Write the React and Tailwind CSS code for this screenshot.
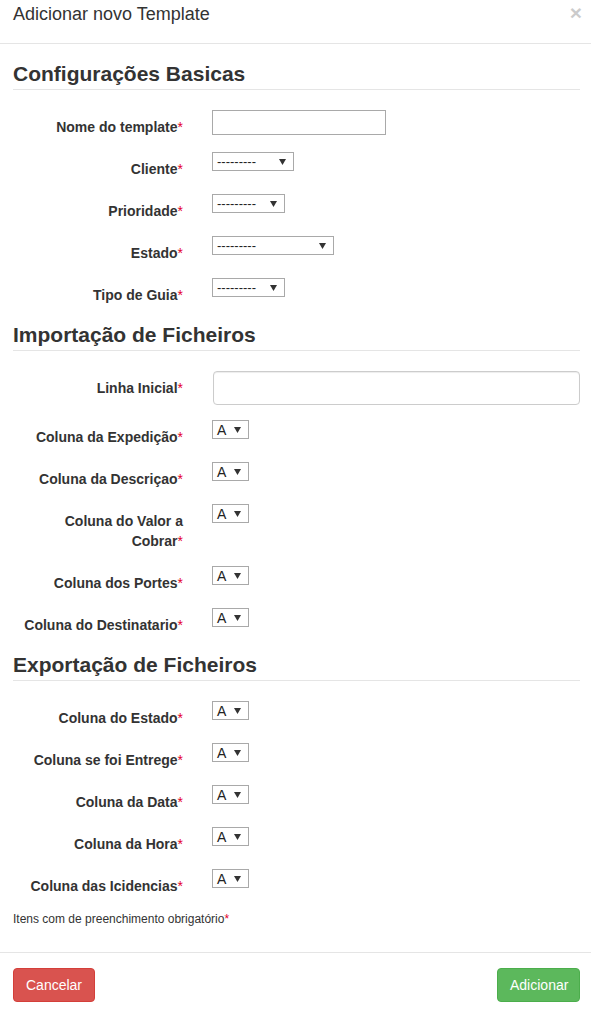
import React from 'react'

const font = { fontFamily: '"Liberation Sans", Arial, sans-serif' }

function Req() {
  return <span className="text-[#e4002b] font-normal">*</span>
}

function Select({ w, value = '---------' }) {
  return (
    <div className={`${w} h-[19px] border border-[#a9a9a9] bg-white flex items-center justify-between pl-[4px] pr-[7px] text-[13px] text-[#222] leading-none`}>
      <span className={value === 'A' ? 'text-[14px]' : 'text-[13px]'}>{value}</span>
      <svg width="7" height="6" viewBox="0 0 7 6"><path d="M0 0h7L3.5 6z" fill="#333" /></svg>
    </div>
  )
}

function Row({ label, children }) {
  return (
    <div className="flex mb-[15px]">
      <label className="w-[170px] shrink-0 text-right font-bold text-[14px] leading-[20px] text-[#333] pt-[7px]">
        {label}<Req />
      </label>
      <div className="pl-[29px] flex-1">{children}</div>
    </div>
  )
}

function Heading({ children }) {
  return (
    <div className="border-b border-[#e5e5e5] pt-[4px] pb-[4px] mb-[20px]">
      <h3 className="text-[21px] font-bold leading-[22px] text-[#333]">{children}</h3>
    </div>
  )
}

export default function App() {
  return (
    <div className="w-[591px] h-[1011px] bg-white overflow-hidden text-[#333]" style={font}>
      <div className="h-[44px] border-b border-[#e5e5e5] flex justify-between pl-[13px] pr-[9px] pt-[4px]">
        <h4 className="text-[18px] leading-[20px] text-[#333]">Adicionar novo Template</h4>
        <span className="text-[21px] font-bold leading-[18px] text-[#000] opacity-20">×</span>
      </div>

      <div className="pl-[13px] pr-[11px] pt-[15px] pb-[24px]">
        <Heading>Configurações Basicas</Heading>
        <Row label="Nome do template">
          <div className="w-[174px] h-[25px] border border-[#a9a9a9] bg-white" />
        </Row>
        <Row label="Cliente"><Select w="w-[82px]" /></Row>
        <Row label="Prioridade"><Select w="w-[73px]" /></Row>
        <Row label="Estado"><Select w="w-[122px]" /></Row>
        <Row label="Tipo de Guia"><Select w="w-[73px]" /></Row>

        <Heading>Importação de Ficheiros</Heading>
        <Row label="Linha Inicial">
          <div className="h-[34px] border border-[#ccc] rounded-[4px] bg-white shadow-[inset_0_1px_1px_rgba(0,0,0,0.075)] ml-[1px]" />
        </Row>
        <Row label="Coluna da Expedição"><Select w="w-[37px]" value="A" /></Row>
        <Row label="Coluna da Descriçao"><Select w="w-[37px]" value="A" /></Row>
        <Row label={<>Coluna do Valor a<br />Cobrar</>}><Select w="w-[37px]" value="A" /></Row>
        <Row label="Coluna dos Portes"><Select w="w-[37px]" value="A" /></Row>
        <Row label="Coluna do Destinatario"><Select w="w-[37px]" value="A" /></Row>

        <Heading>Exportação de Ficheiros</Heading>
        <Row label="Coluna do Estado"><Select w="w-[37px]" value="A" /></Row>
        <Row label="Coluna se foi Entrege"><Select w="w-[37px]" value="A" /></Row>
        <Row label="Coluna da Data"><Select w="w-[37px]" value="A" /></Row>
        <Row label="Coluna da Hora"><Select w="w-[37px]" value="A" /></Row>
        <Row label="Coluna das Icidencias"><Select w="w-[37px]" value="A" /></Row>

        <p className="text-[12px] leading-[17px] text-[#333] mt-[1px]">
          Itens com de preenchimento obrigatório<Req />
        </p>
      </div>

      <div className="border-t border-[#e5e5e5] pl-[13px] pr-[11px] pt-[15px] flex justify-between">
        <button className="h-[34px] px-[12px] w-[82px] rounded-[4px] bg-[#d9534f] border border-[#d43f3a] text-white text-[14px]">Cancelar</button>
        <button className="h-[34px] px-[12px] w-[83px] rounded-[4px] bg-[#5cb85c] border border-[#4cae4c] text-white text-[14px]">Adicionar</button>
      </div>
    </div>
  )
}
